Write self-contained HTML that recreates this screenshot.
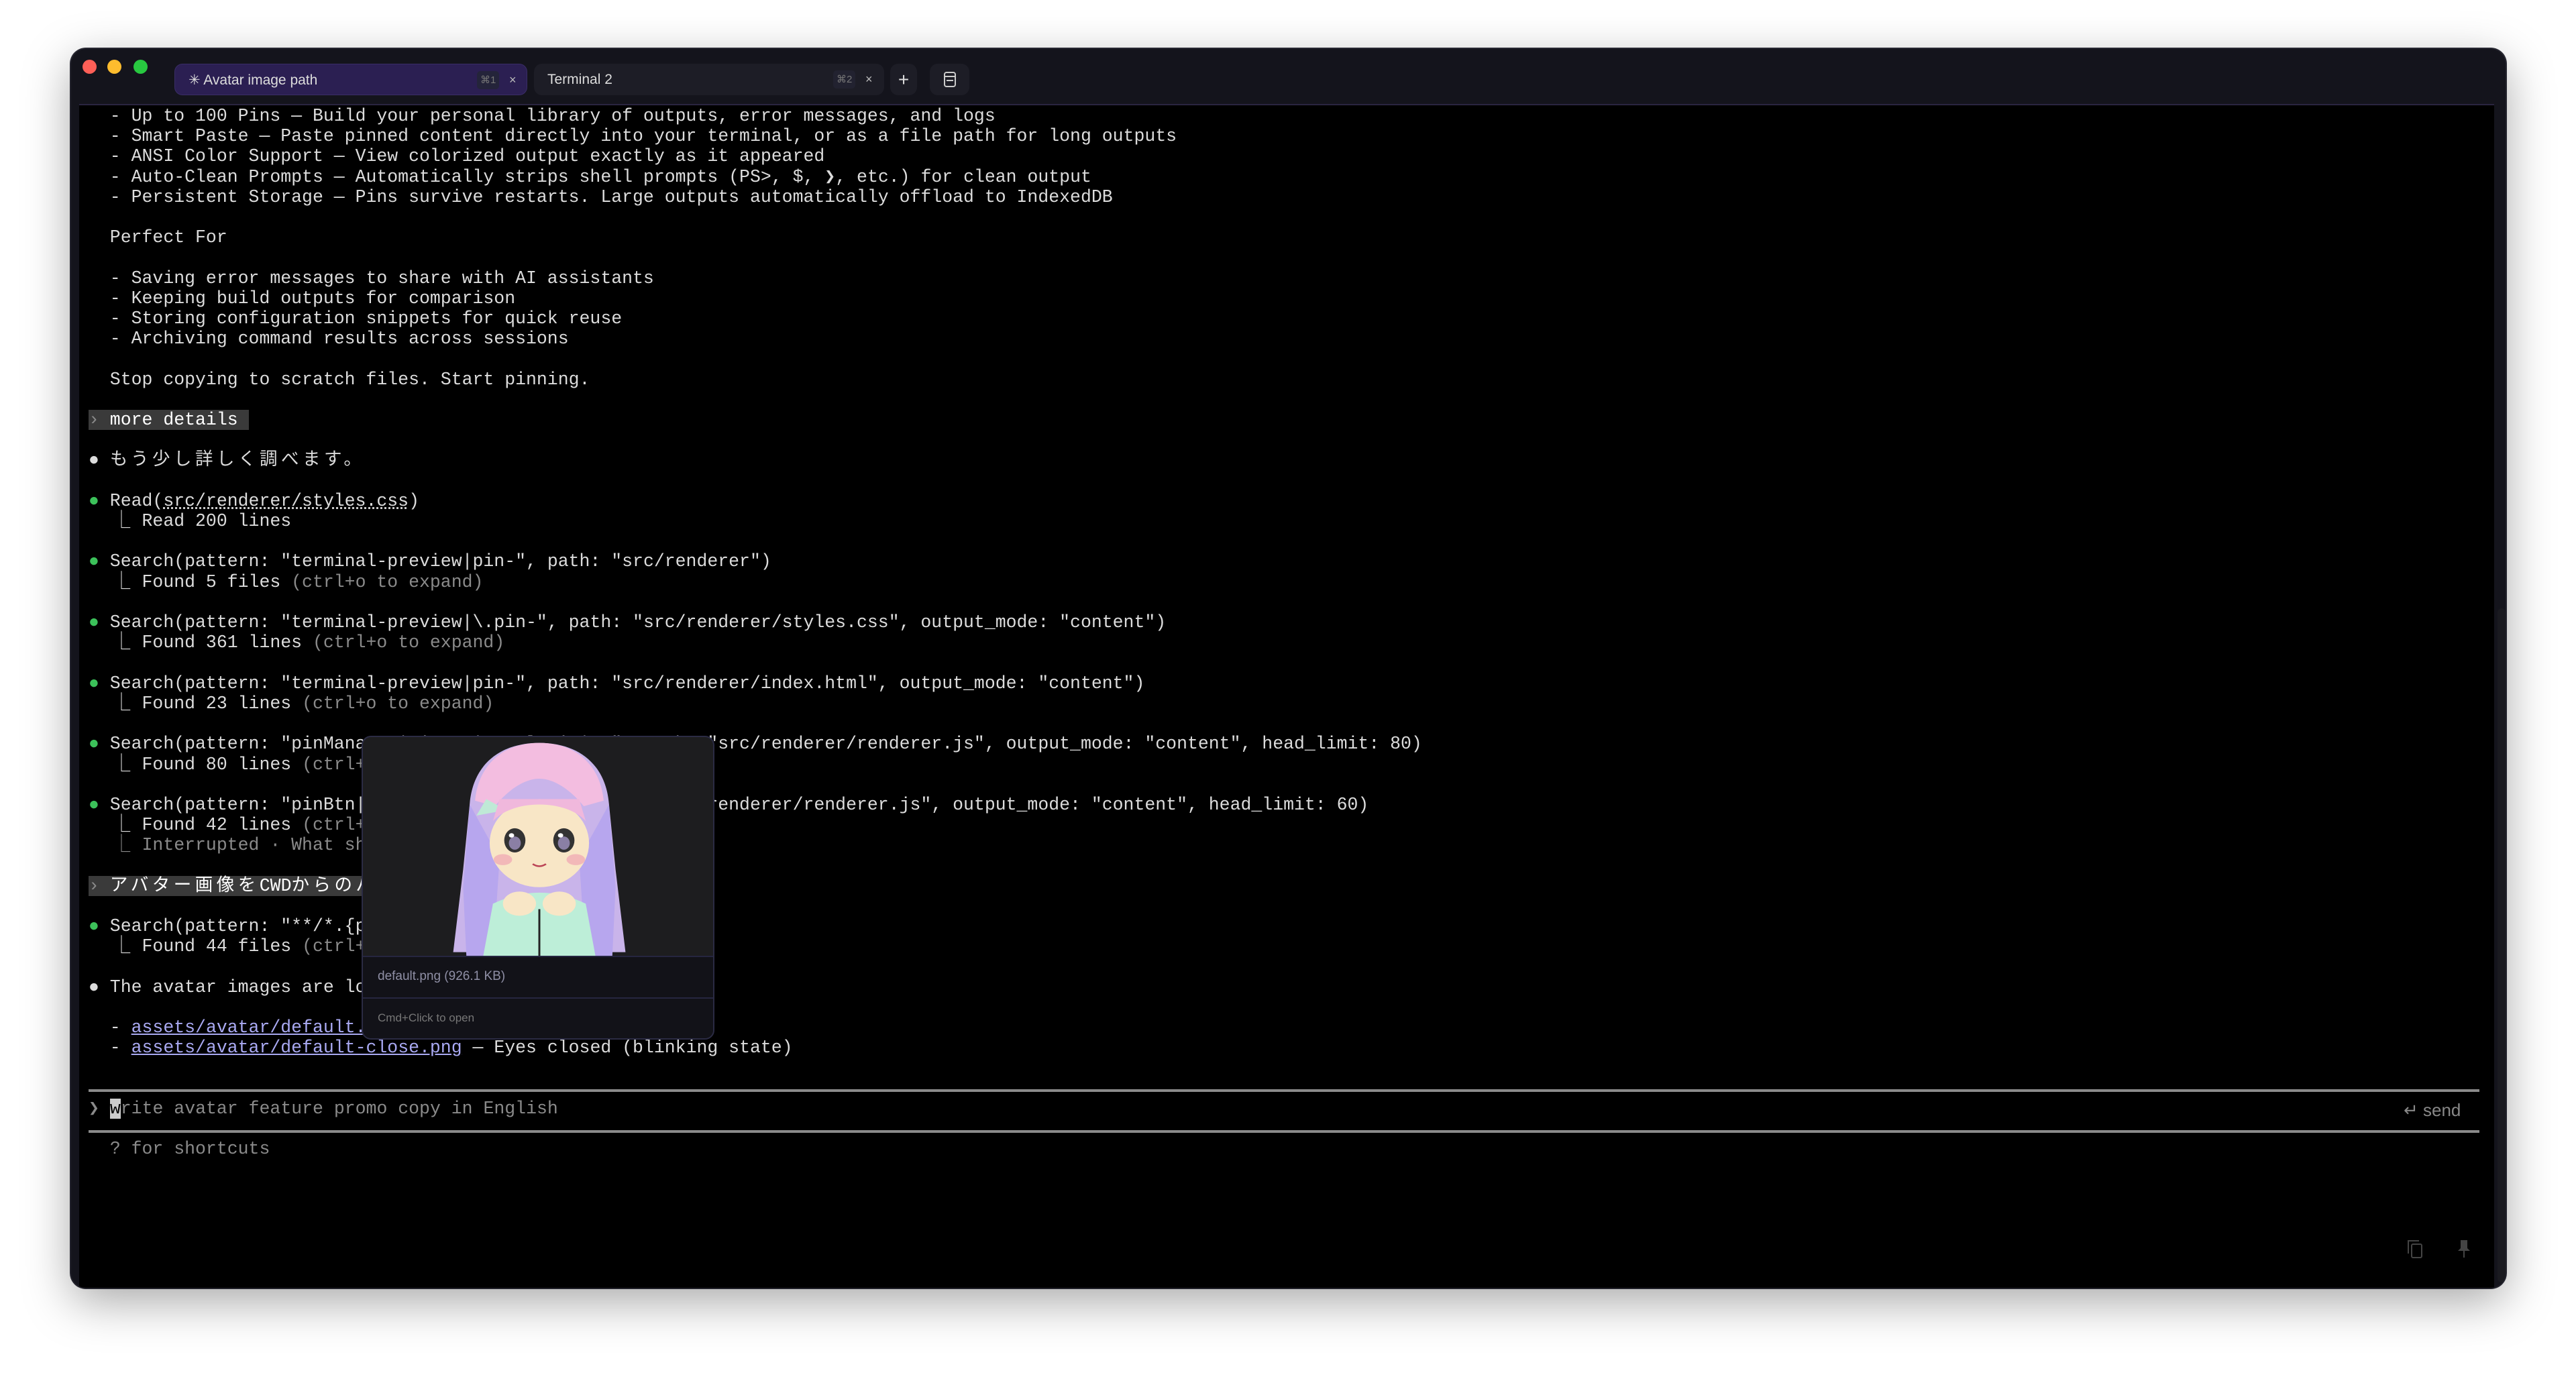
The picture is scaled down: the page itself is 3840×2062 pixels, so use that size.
<!DOCTYPE html>
<html><head><meta charset="utf-8"><style>
*{margin:0;padding:0;box-sizing:border-box}
body{width:3840px;height:2062px;background:#fff;position:relative;overflow:hidden;font-family:"Liberation Sans",sans-serif}
.win{position:absolute;left:106px;top:73px;width:3629px;height:1847px;background:#14141c;border-radius:22px;box-shadow:0 20px 70px rgba(0,0,0,.35),0 0 0 2px #2a2a35;overflow:hidden}
.tl{position:absolute;top:16px;width:21px;height:21px;border-radius:50%}
.tab{position:absolute;top:22px;height:47px;border-radius:12px;color:#ddd;font-size:21px;line-height:47px;padding-left:20px}
.kbd{position:absolute;top:10px;height:27px;line-height:27px;font-size:15px;color:#777;background:#24243a;border-radius:5px;padding:0 5px}
.x{position:absolute;top:0;font-size:18px;color:#bbb}
.term{position:absolute;left:12px;top:82px;width:3600px;height:1765px;background:#000;border-top:2px solid #2a2540}
pre{position:absolute;left:14px;top:1px;font-family:"Liberation Mono","Noto Sans CJK JP",monospace;font-size:26.5px;line-height:30.2px;color:#dcdcdc;white-space:pre}
i{display:inline-block;width:15.9px;font-style:normal;overflow:visible;position:relative;left:-12px}
.j{letter-spacing:5.5px}
.g{color:#3cc15a}.d{color:#8a8a8a}.l{color:#a9a9f2;text-decoration:underline}
.u{text-decoration:underline dotted}
.hl{background:#3a3a3a;color:#fff}
.sep{position:absolute;left:14px;width:3564px;height:4px;background:#8a8a8a}
.pop{position:absolute;left:421px;top:940px;width:526px;height:453px;background:#1d1d1f;border:2px solid #2b2b44;border-radius:14px;overflow:hidden}
.cap{position:absolute;left:0;width:100%;background:#121218;border-top:2px solid #262640;color:#8f8fa5;font-size:19px;padding-left:22px}
</style></head><body>
<div class="win">
 <div class="tl" style="left:17px;background:#fe5f57"></div>
 <div class="tl" style="left:54px;background:#febc2e"></div>
 <div class="tl" style="left:93px;background:#28c840"></div>
 <div class="tab" style="left:154px;width:526px;background:#2b1f52;border:1px solid #3a2d66">✳ Avatar image path<span class="kbd" style="left:450px">⌘1</span><span class="x" style="left:498px">×</span></div>
 <div class="tab" style="left:690px;width:522px;background:#1d1d26">Terminal 2<span class="kbd" style="left:446px;background:#222230">⌘2</span><span class="x" style="left:494px">×</span></div>
 <div class="tab" style="left:1221px;width:40px;background:#1d1d26;padding:0;text-align:center;font-size:28px">+</div>
 <div class="tab" style="left:1280px;width:59px;background:#1d1d26;padding:0"><svg width="59" height="47" viewBox="0 0 59 47"><rect x="22" y="13" width="16" height="21" rx="3" fill="none" stroke="#ccc" stroke-width="2"/><line x1="22" y1="19" x2="38" y2="19" stroke="#ccc" stroke-width="2"/><line x1="25" y1="25" x2="35" y2="25" stroke="#ccc" stroke-width="2"/></svg></div>
 <div class="term">
<pre>  - Up to 100 Pins — Build your personal library of outputs, error messages, and logs
  - Smart Paste — Paste pinned content directly into your terminal, or as a file path for long outputs
  - ANSI Color Support — View colorized output exactly as it appeared
  - Auto-Clean Prompts — Automatically strips shell prompts (PS>, $, ❯, etc.) for clean output
  - Persistent Storage — Pins survive restarts. Large outputs automatically offload to IndexedDB

  Perfect For

  - Saving error messages to share with AI assistants
  - Keeping build outputs for comparison
  - Storing configuration snippets for quick reuse
  - Archiving command results across sessions

  Stop copying to scratch files. Start pinning.

<span class="hl"><span class="d">›</span> more details </span>

● <span class="j">もう少し詳しく調べます。</span>

<span class="g">●</span> Read(<span class="u">src/renderer/styles.css</span>)
   <i>⎿</i> Read 200 lines

<span class="g">●</span> Search(pattern: "terminal-preview|pin-", path: "src/renderer")
   <i>⎿</i> Found 5 files <span class="d">(ctrl+o to expand)</span>

<span class="g">●</span> Search(pattern: "terminal-preview|\.pin-", path: "src/renderer/styles.css", output_mode: "content")
   <i>⎿</i> Found 361 lines <span class="d">(ctrl+o to expand)</span>

<span class="g">●</span> Search(pattern: "terminal-preview|pin-", path: "src/renderer/index.html", output_mode: "content")
   <i>⎿</i> Found 23 lines <span class="d">(ctrl+o to expand)</span>

<span class="g">●</span> Search(pattern: "pinManager|pinBtn|togglePin|xx", path: "src/renderer/renderer.js", output_mode: "content", head_limit: 80)
   <i>⎿</i> Found 80 lines <span class="d">(ctrl+o to expand)</span>

<span class="g">●</span> Search(pattern: "pinBtn|pinPanel|pinListxx", path: "src/renderer/renderer.js", output_mode: "content", head_limit: 60)
   <i>⎿</i> Found 42 lines <span class="d">(ctrl+o to expand)</span>
   <span class="d"><i>⎿</i> Interrupted · What should Claude do instead?</span>

<span class="hl"><span class="d">›</span> <span class="j">アバター画像を</span>CWD<span class="j">からのパスで</span> </span>

<span class="g">●</span> Search(pattern: "**/*.{png,jpg}")
   <i>⎿</i> Found 44 files <span class="d">(ctrl+o to expand)</span>

● The avatar images are located at:

  - <span class="l">assets/avatar/default.png</span> — Eyes open
  - <span class="l">assets/avatar/default-close.png</span> — Eyes closed (blinking state)


<span class="d">❯</span> <span style="background:#ccc;color:#000">w</span><span class="d">rite avatar feature promo copy in English</span>

  <span class="d">? for shortcuts</span></pre>
  <div class="sep" style="top:1467px"></div>
  <div class="sep" style="top:1528px"></div>
  <div style="position:absolute;left:3465px;top:1483px;font-family:'Liberation Sans',sans-serif;font-size:26px;color:#888">↵ send</div>
  <svg style="position:absolute;left:3469px;top:1690px" width="30" height="32" viewBox="0 0 30 32"><path d="M3 22V3h16" fill="none" stroke="#444" stroke-width="2"/><rect x="8" y="8" width="15" height="20" rx="2" fill="none" stroke="#444" stroke-width="2"/></svg>
  <svg style="position:absolute;left:3545px;top:1690px" width="20" height="30" viewBox="0 0 20 30"><path d="M5 2h10v12l4 4H1l4-4z" fill="#444"/><line x1="10" y1="18" x2="10" y2="28" stroke="#444" stroke-width="2"/></svg>
  <div style="position:absolute;left:3605px;top:750px;width:12px;height:1005px;background:#1a1a20;border-radius:6px"></div>
  <div class="pop">
   <svg style="position:absolute;left:100px;top:2px" width="326" height="326" viewBox="0 0 330 397" preserveAspectRatio="none">
    <path d="M165 8c60 0 100 40 105 110l10 120 15 150H35l15-150 10-120C65 48 105 8 165 8z" fill="#c9b4ea"/>
    <path d="M165 8c55 0 92 40 97 105l-30 10c-20-30-45-50-67-50s-47 20-67 50l-30-10C73 48 110 8 165 8z" fill="#f3bde0"/>
    <path d="M60 120l-10 150 5 128h40l10-180z" fill="#b7a6ee"/><path d="M270 120l10 150-5 128h-40l-10-180z" fill="#b7a6ee"/>
    <path d="M70 140l15-30 30 20z" fill="#bfe9d6"/>
    <ellipse cx="165" cy="190" rx="75" ry="80" fill="#f8e6c6"/>
    <path d="M95 150c30-40 110-40 140 0l-10-40H105z" fill="#f0b8dc"/>
    <ellipse cx="128" cy="185" rx="16" ry="22" fill="#333"/><ellipse cx="202" cy="185" rx="16" ry="22" fill="#333"/>
    <ellipse cx="128" cy="190" rx="9" ry="12" fill="#8a7fa5"/><ellipse cx="202" cy="190" rx="9" ry="12" fill="#8a7fa5"/>
    <circle cx="123" cy="176" r="4" fill="#fff"/><circle cx="197" cy="176" r="4" fill="#fff"/>
    <ellipse cx="110" cy="220" rx="14" ry="10" fill="#f2b8b8"/><ellipse cx="220" cy="220" rx="14" ry="10" fill="#f2b8b8"/>
    <path d="M155 228q10 8 20 0" stroke="#b45" stroke-width="3" fill="none"/>
    <path d="M95 300q70-40 140 0l15 97H80z" fill="#bdeed8"/>
    <ellipse cx="135" cy="300" rx="25" ry="22" fill="#f8e6c6"/><ellipse cx="195" cy="300" rx="25" ry="22" fill="#f8e6c6"/>
    <line x1="165" y1="310" x2="165" y2="397" stroke="#222" stroke-width="3"/>
   </svg>
   <div class="cap" style="top:326px;height:62px;line-height:58px">default.png (926.1 KB)</div>
   <div class="cap" style="top:388px;height:65px;line-height:58px;font-size:17px;color:#777">Cmd+Click to open</div>
  </div>
 </div>
</div>
</body></html>
